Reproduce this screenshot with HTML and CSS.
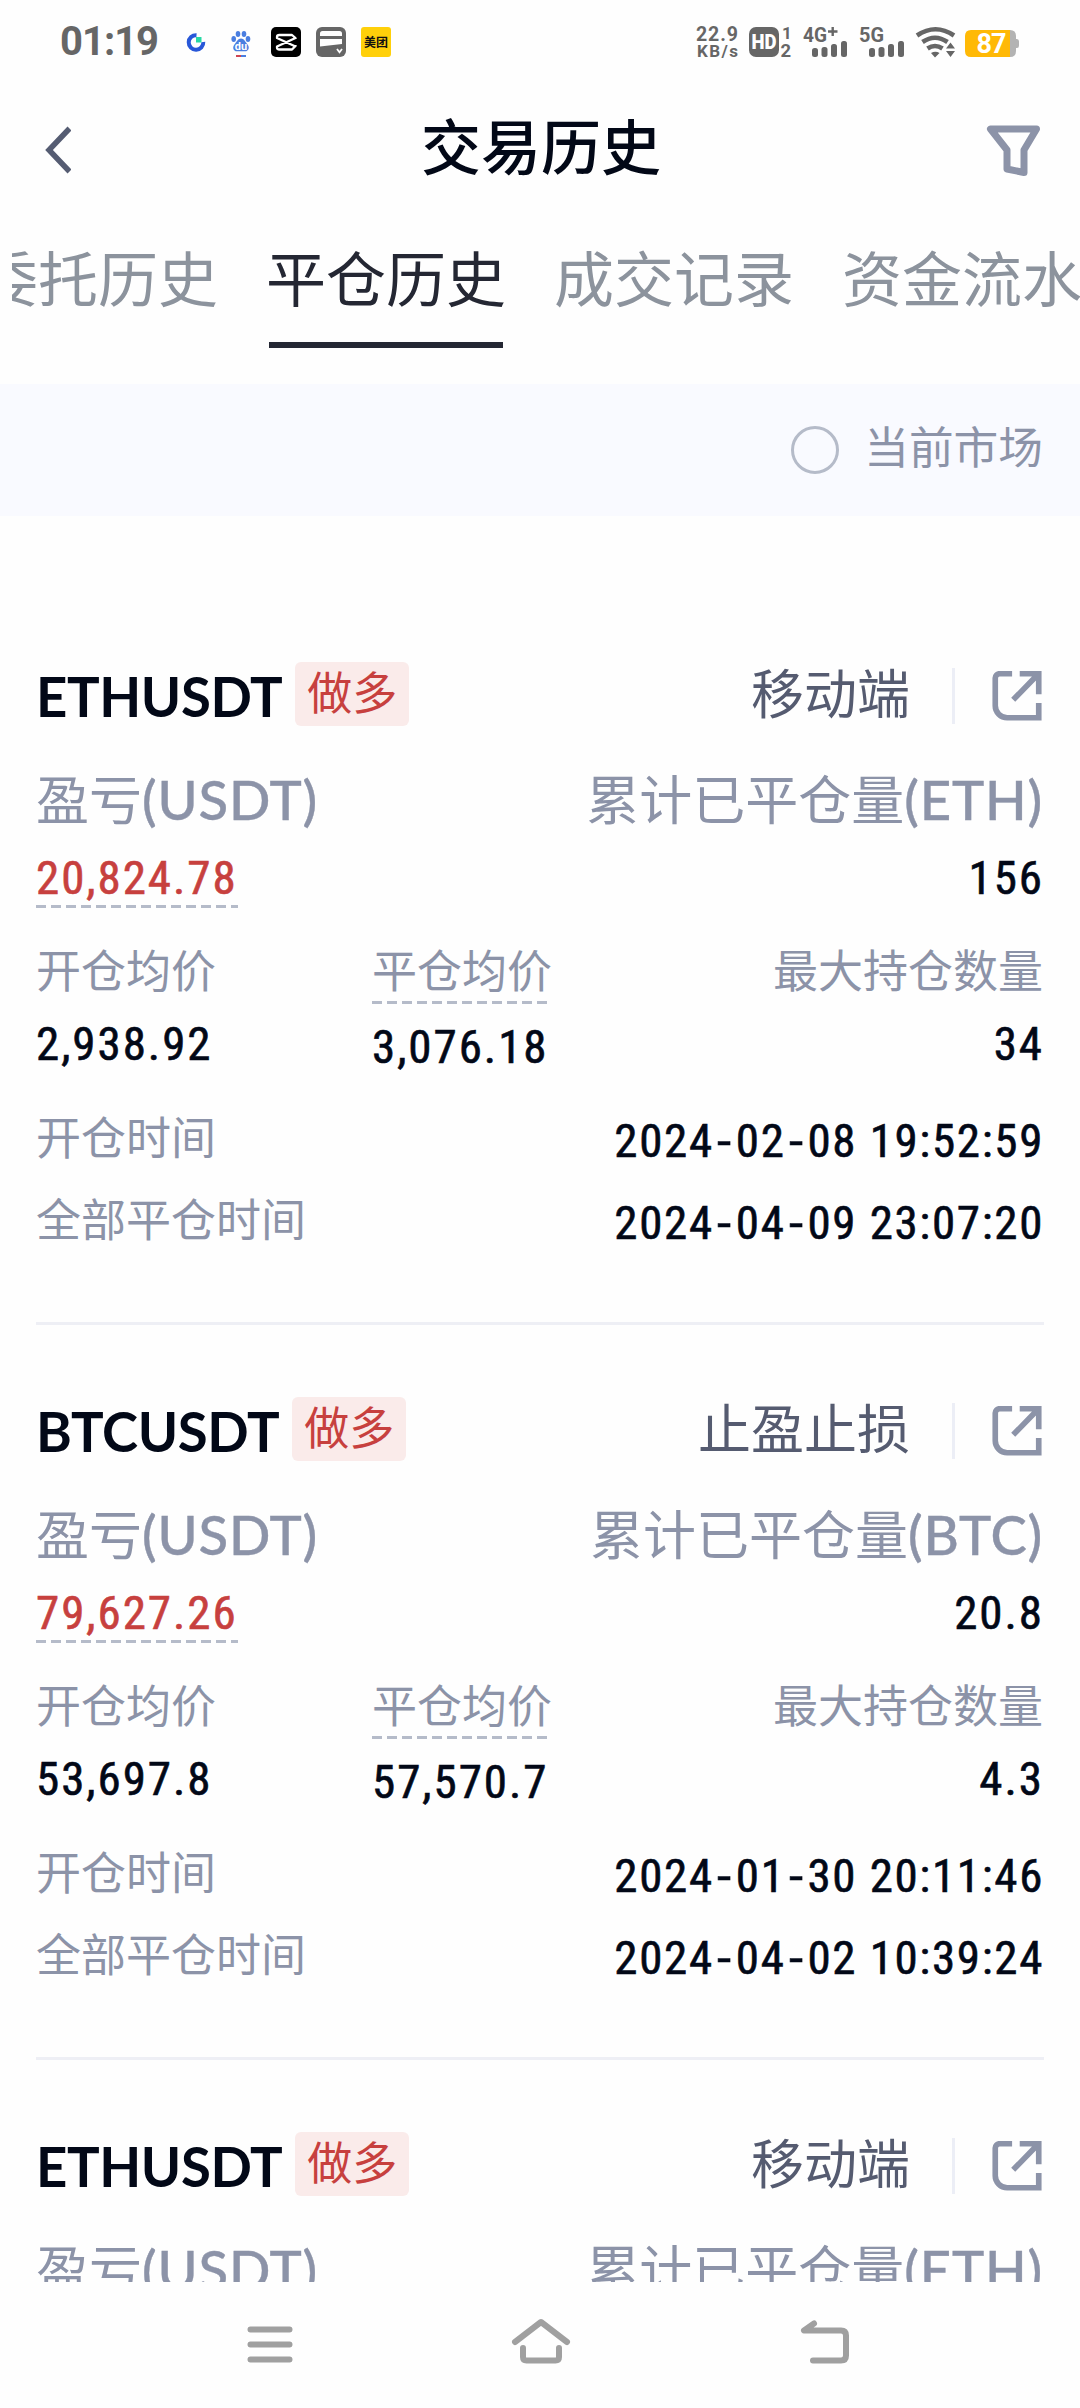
FILE: index.html
```html
<!DOCTYPE html>
<html lang="zh-CN">
<head>
<meta charset="utf-8">
<title>交易历史</title>
<link rel="stylesheet" href="styles.css">
</head>
<body>
<svg class="defs" width="0" height="0" aria-hidden="true">
  <symbol id="share" viewBox="1.500 1.500 46 46">
    <path d="M20 4H8.500a4 4 0 0 0-4 4V33.500a11 11 0 0 0 11 11h29V31M27 4h17.500v19M43 5.500L21 28" fill="none" stroke="currentColor" stroke-width="5.200"/>
  </symbol>
</svg>
<div class="screen">
  <header class="status">
    <div class="status-left">
      <span class="clock">01:19</span>
      <svg class="app-icons" width="206" height="32" viewBox="186 26 206 32">
        <path d="M196.500 35.200a7.300 7.300 0 1 0 6.800 6.800" fill="none" stroke="#2857d8" stroke-width="4"/>
        <rect x="196" y="37" width="5.500" height="5.500" fill="#28d9a5"/>
        <g fill="#4a7ee0"><ellipse cx="233.700" cy="39" rx="2.300" ry="3"/><ellipse cx="238" cy="34" rx="2.300" ry="3"/><ellipse cx="244" cy="34" rx="2.300" ry="3"/><ellipse cx="248" cy="39" rx="2.300" ry="3"/>
        <path d="M241 38.500c3 0 4 3 6 5.200 3 3.300 2 7.600-2 7.600h-8c-4 0-5-4.300-2-7.600 2-2.200 3-5.200 6-5.200z"/></g>
        <text x="241" y="49.500" text-anchor="middle" class="du">du</text>
        <rect x="236" y="55" width="5" height="2" fill="#cf4553"/><rect x="241" y="55" width="5" height="2" fill="#4a7ee0"/>
        <rect x="271" y="27" width="30" height="30" rx="5" fill="#000"/>
        <path d="M295.500 39v-1L292 35h-12.500q-2.500 0-2.500 2v1l18.500 8.500M295.500 45v1L292 49.500h-12.500q-2.500 0-2.500-2v-1L295.500 38" fill="none" stroke="#fff" stroke-width="2.300" stroke-linejoin="round"/>
        <rect x="316" y="27" width="30" height="30" rx="6" fill="#666"/>
        <path d="M320 36v-2.500q0-2.500 2.500-2.500h17q2.500 0 2.500 2.500V36zM320 39h22v5l-22 2.500z" fill="#fff"/>
        <path d="M337 49l2.500 3.200L342 49" fill="none" stroke="#fff" stroke-width="1.800"/>
        <rect x="361" y="27" width="30" height="30" rx="3" fill="#ffd00a"/>
        <text x="376" y="46.500" text-anchor="middle" class="mt">美团</text>
      </svg>
    </div>
    <div class="status-right">
      <svg width="328" height="50" viewBox="694 17 328 50">
        <g class="st">
          <text x="697" y="41" font-size="19.500" textLength="42">22.9</text>
          <text x="698" y="57" font-size="17" textLength="41">KB/s</text>
          <rect x="750" y="27" width="30" height="30" rx="7"/>
          <text x="752.500" y="49" font-size="20" textLength="25" lengthAdjust="spacingAndGlyphs" class="inv">HD</text>
          <text x="783" y="39" font-size="17">1</text>
          <text x="781.500" y="57" font-size="18.500">2</text>
          <text x="804" y="42" font-size="21" textLength="24" lengthAdjust="spacingAndGlyphs">4G</text>
          <path d="M829 31.500h9.500M833.700 27v9" fill="none" stroke="#666" stroke-width="2.400"/>
          <text x="860" y="42" font-size="21" textLength="25" lengthAdjust="spacingAndGlyphs">5G</text>
          <g id="bars"><rect x="813" y="48" width="6" height="9" rx="2.500"/><rect x="822.500" y="47" width="6" height="10" rx="2.500"/><rect x="832" y="44" width="6" height="13" rx="2.500"/><rect x="842" y="41" width="6" height="16" rx="2.500"/></g>
          <use href="#bars" x="57"/>
          <path d="M918 35.500q18.500-12.500 37 0M923.500 42q12.500-8.500 25 0M928.500 48.500q7.500-5 15 0" fill="none" stroke="#666" stroke-width="4.600"/>
          <path d="M932 53q4.500-2.500 8.500 0L936 57.500zM947 48.500l4.500-6 4.500 6zM947 51l4.500 6 4.500-6z"/>
        </g>
        <path d="M1010 30h1q6 0 6 6v3h1q2 0 2 2.500v4q0 2.500-2 2.500h-1v3q0 6-6 6h-3z" fill="#b3b3b3"/>
        <path d="M972 30h39v27h-39q-6 0-6-6V36q0-6 6-6z" fill="#ffb906"/>
        <text x="977.500" y="53" class="batt" textLength="30">87</text>
      </svg>
    </div>
  </header>

  <nav class="topbar">
    <svg width="30" height="50" viewBox="0 0 30 50"><path d="M28.500 3.500L8 25l20.500 21.500" fill="none" stroke="#555c72" stroke-width="5.500"/></svg>
    <h1>交易历史</h1>
    <svg width="58" height="56" viewBox="0 0 58 56"><path d="M5.500 7h46L39 28v22.500L22 47V28z" fill="none" stroke="#8c93a8" stroke-width="7" stroke-linejoin="round"/></svg>
  </nav>

  <div class="tabs">
    <span class="tab">委托历史</span>
    <span class="tab active">平仓历史</span>
    <span class="tab">成交记录</span>
    <span class="tab">资金流水</span>
  </div>

  <div class="market"><span class="radio"></span><span class="market-text">当前市场</span></div>

  <main class="list">
    <article class="card">
      <div class="head">
        <span class="symbol">ETHUSDT</span><span class="badge">做多</span>
        <span class="source">移动端</span><span class="rule"></span>
        <svg class="share"><use href="#share"/></svg>
      </div>
      <div class="row big"><span>盈亏<b>(USDT)</b></span><span>累计已平仓量<b>(ETH)</b></span></div>
      <div class="row nums"><span class="num pnl dashed">20,824.78</span><span class="num">156</span></div>
      <div class="cols">
        <div class="col"><span class="label">开仓均价</span><span class="num">2,938.92</span></div>
        <div class="col"><span class="label dashed">平仓均价</span><span class="num">3,076.18</span></div>
        <div class="col end"><span class="label">最大持仓数量</span><span class="num">34</span></div>
      </div>
      <div class="row time"><span class="label">开仓时间</span><span class="num">2024<i>-</i>02<i>-</i>08 19:52:59</span></div>
      <div class="row time"><span class="label">全部平仓时间</span><span class="num">2024<i>-</i>04<i>-</i>09 23:07:20</span></div>
    </article>
    <article class="card">
      <div class="head">
        <span class="symbol">BTCUSDT</span><span class="badge">做多</span>
        <span class="source">止盈止损</span><span class="rule"></span>
        <svg class="share"><use href="#share"/></svg>
      </div>
      <div class="row big"><span>盈亏<b>(USDT)</b></span><span>累计已平仓量<b>(BTC)</b></span></div>
      <div class="row nums"><span class="num pnl dashed">79,627.26</span><span class="num">20.8</span></div>
      <div class="cols">
        <div class="col"><span class="label">开仓均价</span><span class="num">53,697.8</span></div>
        <div class="col"><span class="label dashed">平仓均价</span><span class="num">57,570.7</span></div>
        <div class="col end"><span class="label">最大持仓数量</span><span class="num">4.3</span></div>
      </div>
      <div class="row time"><span class="label">开仓时间</span><span class="num">2024<i>-</i>01<i>-</i>30 20:11:46</span></div>
      <div class="row time"><span class="label">全部平仓时间</span><span class="num">2024<i>-</i>04<i>-</i>02 10:39:24</span></div>
    </article>
    <article class="card">
      <div class="head">
        <span class="symbol">ETHUSDT</span><span class="badge">做多</span>
        <span class="source">移动端</span><span class="rule"></span>
        <svg class="share"><use href="#share"/></svg>
      </div>
      <div class="row big"><span>盈亏<b>(USDT)</b></span><span>累计已平仓量<b>(ETH)</b></span></div>
    </article>
  </main>

  <footer class="sysnav">
    <svg width="46" height="44" viewBox="0 0 46 44"><path d="M3.500 10.500h39M3.500 25.500h39M3.500 40.500h39"/></svg>
    <svg width="60" height="50" viewBox="0 0 60 50"><path d="M4 28L30 8l26 20M12 34v9q0 3.500 3.500 3.500h29q3.500 0 3.500-3.500v-9"/></svg>
    <svg width="50" height="50" viewBox="0 0 50 50"><path d="M14 9.500L4 16.500h37q5 0 5 5v20q0 5-5 5H13"/></svg>
  </footer>
</div>
</body>
</html>
```
FILE: styles.css
```css
* { box-sizing: border-box; }
body {
  margin: 0;
  background: #fefefe;
  font-family: "Noto Sans CJK SC", sans-serif;
  color: #020817;
}
.defs { display: block; width: 0; height: 0; }
.screen {
  width: 1080px;
  height: 2408px;
  display: flex;
  flex-direction: column;
  overflow: hidden;
}
.screen svg { display: block; flex: none; }

/* status bar */
.status {
  flex: none;
  height: 84px;
  display: flex;
  justify-content: space-between;
  align-items: center;
  padding: 0 59px 0 60px;
}
.status-left { display: flex; align-items: center; gap: 26px; }
.clock {
  width: 100px;
  font: 700 40px/56px Roboto, sans-serif;
  letter-spacing: -1px;
  color: #666;
  white-space: nowrap;
}
.du { font: 700 11px Roboto, sans-serif; fill: #fff; }
.mt { font: 700 12px "Noto Sans CJK SC", sans-serif; fill: #111; }
.st { fill: #666; font-family: Roboto, sans-serif; font-weight: 700; }
.st .inv { fill: #fff; font-weight: 900; }
.batt { font: 700 27px Roboto, sans-serif; fill: #fff; }

/* title bar */
.topbar {
  flex: none;
  height: 132px;
  display: flex;
  justify-content: space-between;
  align-items: center;
  padding: 0 37px 0 41px;
}
.topbar h1 {
  margin: 0 0 0 26px;
  font-size: 60px;
  font-weight: 500;
  line-height: 120px;
  padding-bottom: 12px;
}

/* tabs */
.tabs {
  flex: none;
  height: 168px;
  margin-left: 12px;
  display: flex;
  gap: 48px;
  overflow: hidden;
}
.tab {
  flex: none;
  width: 240px;
  height: 132px;
  font-size: 60px;
  line-height: 120px;
  color: #8c939d;
  white-space: nowrap;
}
.tab:first-child { margin-left: -34px; }
.tab.active {
  color: #242733;
  background: linear-gradient(#242733, #242733) center bottom / 234px 6px no-repeat;
}

/* market filter */
.market {
  flex: none;
  height: 132px;
  display: flex;
  justify-content: flex-end;
  align-items: center;
  gap: 25px;
  padding-right: 37px;
  background: #f9faff;
}
.radio {
  width: 48px;
  height: 48px;
  border: 3px solid #b5bbc9;
  border-radius: 50%;
}
.market-text {
  font-size: 44.7px;
  line-height: 60px;
  padding-bottom: 11px;
  color: #8c93a8;
}

/* position list */
.list {
  flex: none;
  height: 1766px;
  padding: 74px 36px 0;
  overflow: hidden;
}
.card {
  height: 735px;
  padding-top: 70px;
  border-bottom: 3px solid #eeeff5;
}
.head { height: 68px; display: flex; align-items: center; }
.symbol {
  font: 700 54.5px/68px Lato, sans-serif;
  letter-spacing: -0.4px;
  padding-top: 4px;
}
.badge {
  height: 64px;
  margin-left: 13px;
  padding: 0 12px;
  border-radius: 6px;
  background: #faebea;
  color: #c7403e;
  font-size: 45px;
  line-height: 58px;
}
.source {
  margin-left: auto;
  margin-top: -7px;
  font-size: 53px;
  line-height: 68px;
  color: #555b70;
}
.rule { width: 3px; height: 56px; margin: 4px 37px 0 42px; background: #eceef6; }
.share { width: 50px; height: 50px; margin: 4px 2px 0 0; color: #8c93a8; }
.row { display: flex; justify-content: space-between; }
.big {
  height: 68px;
  margin-top: 38px;
  padding-right: 1px;
  font: 400 53px/67px Lato, "Noto Sans CJK SC", sans-serif;
  color: #8c93a8;
  white-space: nowrap;
}
.big b {
  font-size: 54.5px;
  font-weight: 500;
  letter-spacing: 0.8px;
  -webkit-text-stroke: 0.4px #8c93a8;
}
.num {
  font: 400 47px/55px Roboto, sans-serif;
  font-stretch: 87%;
  letter-spacing: 1.95px;
  -webkit-text-stroke: 0.6px currentColor;
  white-space: nowrap;
}
.num i { font-style: normal; display: inline-block; width: 22px; text-align: center; transform: scaleX(1.25); }
.pnl { color: #c7403e; }
.nums { margin-top: 16px; height: 58px; }
.label { font-size: 45px; line-height: 65px; color: #8c93a8; white-space: nowrap; }
.dashed {
  padding-bottom: 3px;
  background: repeating-linear-gradient(90deg, #b5bbc9 0 10px, transparent 10px 15px) left bottom / 100% 3px no-repeat;
}
.cols { display: grid; grid-template-columns: 336px 1fr auto; height: 138px; margin-top: 28px; }
.col { display: flex; flex-direction: column; align-items: flex-start; gap: 15px; }
.end { align-items: flex-end; }
.end .label { margin-right: 1px; }
.time { height: 60px; margin-top: 34px; }
.time + .time { margin-top: 22px; }
.time .label { line-height: 55px; }
.time .num { line-height: 65px; letter-spacing: 1.65px; }

/* system navigation */
.sysnav {
  flex: none;
  height: 126px;
  display: flex;
  justify-content: space-between;
  align-items: flex-start;
  padding: 32px 230px 0 247px;
}
.sysnav svg { fill: none; stroke: #a0a0a0; stroke-width: 6; stroke-linecap: round; stroke-linejoin: round; }
.sysnav svg:first-child { margin-top: 5px; }
.sysnav svg:nth-child(2) { margin-right: 12px; }
```
